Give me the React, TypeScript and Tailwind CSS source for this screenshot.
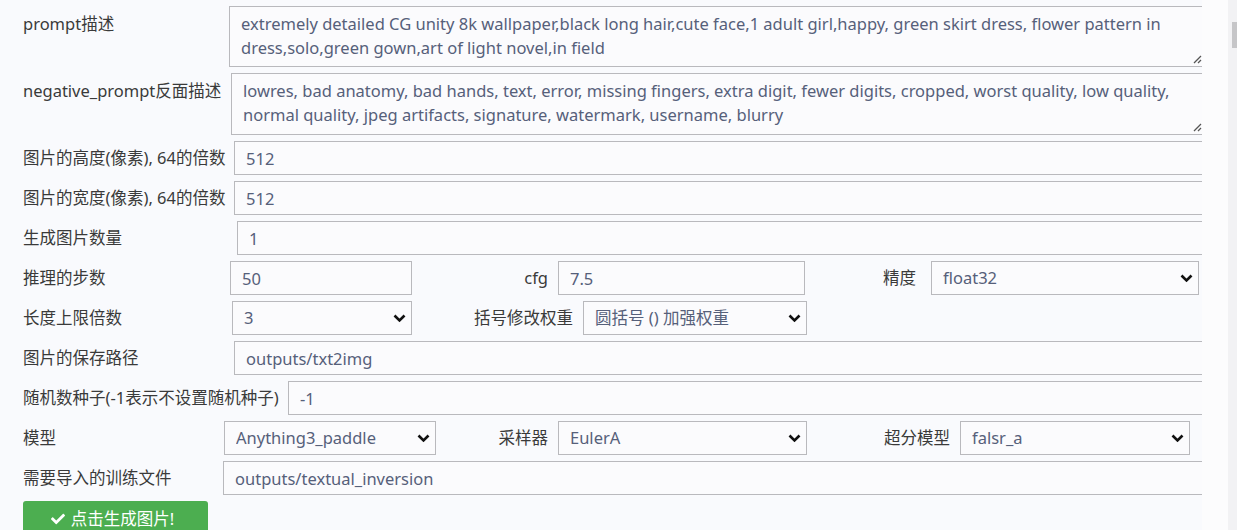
import { FaCheck } from "react-icons/fa";

const field =
  "h-[34px] border border-[#b9b9bd] bg-[#fbfbfd] pl-[11px] text-[16.5px] text-[#56607a] outline-none";

const Chevron = () => (
  <svg
    className="pointer-events-none absolute right-[6px] top-1/2 -translate-y-1/2"
    width="13"
    height="9"
    viewBox="0 0 13 9"
  >
    <path d="M1.5 2 L6.5 7 L11.5 2" fill="none" stroke="#111" strokeWidth="2.6" />
  </svg>
);

const Select = ({ value, width }: { value: string; width: string }) => (
  <div className={`relative ${width}`}>
    <select className={`${field} w-full appearance-none`} defaultValue={value}>
      <option>{value}</option>
    </select>
    <Chevron />
  </div>
);

const Grip = () => (
  <svg
    className="pointer-events-none absolute bottom-[3px] right-[4px]"
    width="10"
    height="10"
    viewBox="0 0 10 10"
  >
    <path d="M9 2 L2 9 M9 6 L6 9" stroke="#555" strokeWidth="1.3" />
  </svg>
);

const Row = ({
  label,
  labelWidth,
  value,
}: {
  label: string;
  labelWidth: string;
  value: string;
}) => (
  <div className="flex items-center">
    <span className={`${labelWidth} shrink-0 whitespace-nowrap`}>{label}</span>
    <input className={`${field} -mr-[4px] min-w-0 flex-1`} defaultValue={value} />
  </div>
);

const Area = ({
  label,
  labelWidth,
  height,
  value,
}: {
  label: string;
  labelWidth: string;
  height: string;
  value: string;
}) => (
  <div className="flex items-start">
    <span className={`${labelWidth} shrink-0 whitespace-nowrap pt-[6px] leading-[24px]`}>
      {label}
    </span>
    <div className="relative -mr-[4px] min-w-0 flex-1">
      <textarea
        className={`${height} block w-full resize-none border border-[#b9b9bd] bg-[#fbfbfd] px-[11px] pt-[5px] text-[16.5px] leading-[24px] text-[#56607a] outline-none`}
        defaultValue={value}
      />
      <Grip />
    </div>
  </div>
);

export default function App() {
  return (
    <div
      className="flex h-[530px] w-[1237px] overflow-hidden bg-[#f9fafd] text-[16.5px] text-[#3a3a3a]"
      style={{ fontFamily: '"Noto Sans", "Noto Sans CJK SC", sans-serif' }}
    >
      <div className="flex w-[1202px] shrink-0 flex-col gap-[6px] overflow-hidden pl-[23px] pt-[6px]">
        <Area
          label="prompt描述"
          labelWidth="w-[206px]"
          height="h-[61px]"
          value="extremely detailed CG unity 8k wallpaper,black long hair,cute face,1 adult girl,happy, green skirt dress, flower pattern in dress,solo,green gown,art of light novel,in field"
        />
        <Area
          label="negative_prompt反面描述"
          labelWidth="w-[208px]"
          height="h-[62px]"
          value="lowres, bad anatomy, bad hands, text, error, missing fingers, extra digit, fewer digits, cropped, worst quality, low quality, normal quality, jpeg artifacts, signature, watermark, username, blurry"
        />
        <Row label="图片的高度(像素), 64的倍数" labelWidth="w-[211px]" value="512" />
        <Row label="图片的宽度(像素), 64的倍数" labelWidth="w-[211px]" value="512" />
        <Row label="生成图片数量" labelWidth="w-[214px]" value="1" />

        <div className="flex items-center">
          <span className="w-[207px] shrink-0">推理的步数</span>
          <input className={`${field} w-[182px]`} defaultValue="50" />
          <span className="w-[136px] shrink-0 text-right">cfg</span>
          <input className={`${field} ml-[10px] w-[247px]`} defaultValue="7.5" />
          <span className="w-[111px] shrink-0 text-right">精度</span>
          <div className="ml-[15px]">
            <Select value="float32" width="w-[268px]" />
          </div>
        </div>

        <div className="flex items-center">
          <span className="w-[209px] shrink-0">长度上限倍数</span>
          <Select value="3" width="w-[180px]" />
          <span className="w-[161px] shrink-0 text-right">括号修改权重</span>
          <div className="ml-[10px]">
            <Select value="圆括号 () 加强权重" width="w-[224px]" />
          </div>
        </div>

        <Row label="图片的保存路径" labelWidth="w-[211px]" value="outputs/txt2img" />
        <Row label="随机数种子(-1表示不设置随机种子)" labelWidth="w-[265px]" value="-1" />

        <div className="flex items-center">
          <span className="w-[201px] shrink-0">模型</span>
          <Select value="Anything3_paddle" width="w-[212px]" />
          <span className="w-[112px] shrink-0 text-right">采样器</span>
          <div className="ml-[10px]">
            <Select value="EulerA" width="w-[249px]" />
          </div>
          <span className="w-[143px] shrink-0 text-right">超分模型</span>
          <div className="ml-[10px]">
            <Select value="falsr_a" width="w-[230px]" />
          </div>
        </div>

        <Row label="需要导入的训练文件" labelWidth="w-[200px]" value="outputs/textual_inversion" />

        <div>
          <button className="flex h-[36px] w-[185px] items-center justify-center gap-[6px] rounded-[3px] bg-[#4cae50] pr-[6px] text-[16.5px] text-white">
            <FaCheck size={14} />
            点击生成图片!
          </button>
        </div>
      </div>
      <div className="w-[26px] shrink-0 bg-[#fcfcfd]" />
      <div className="flex w-[9px] shrink-0 justify-end bg-[#f2f2f4] pt-[22px]">
        <div className="h-[26px] w-[5px] bg-[#c6c6c8]" />
      </div>
    </div>
  );
}
